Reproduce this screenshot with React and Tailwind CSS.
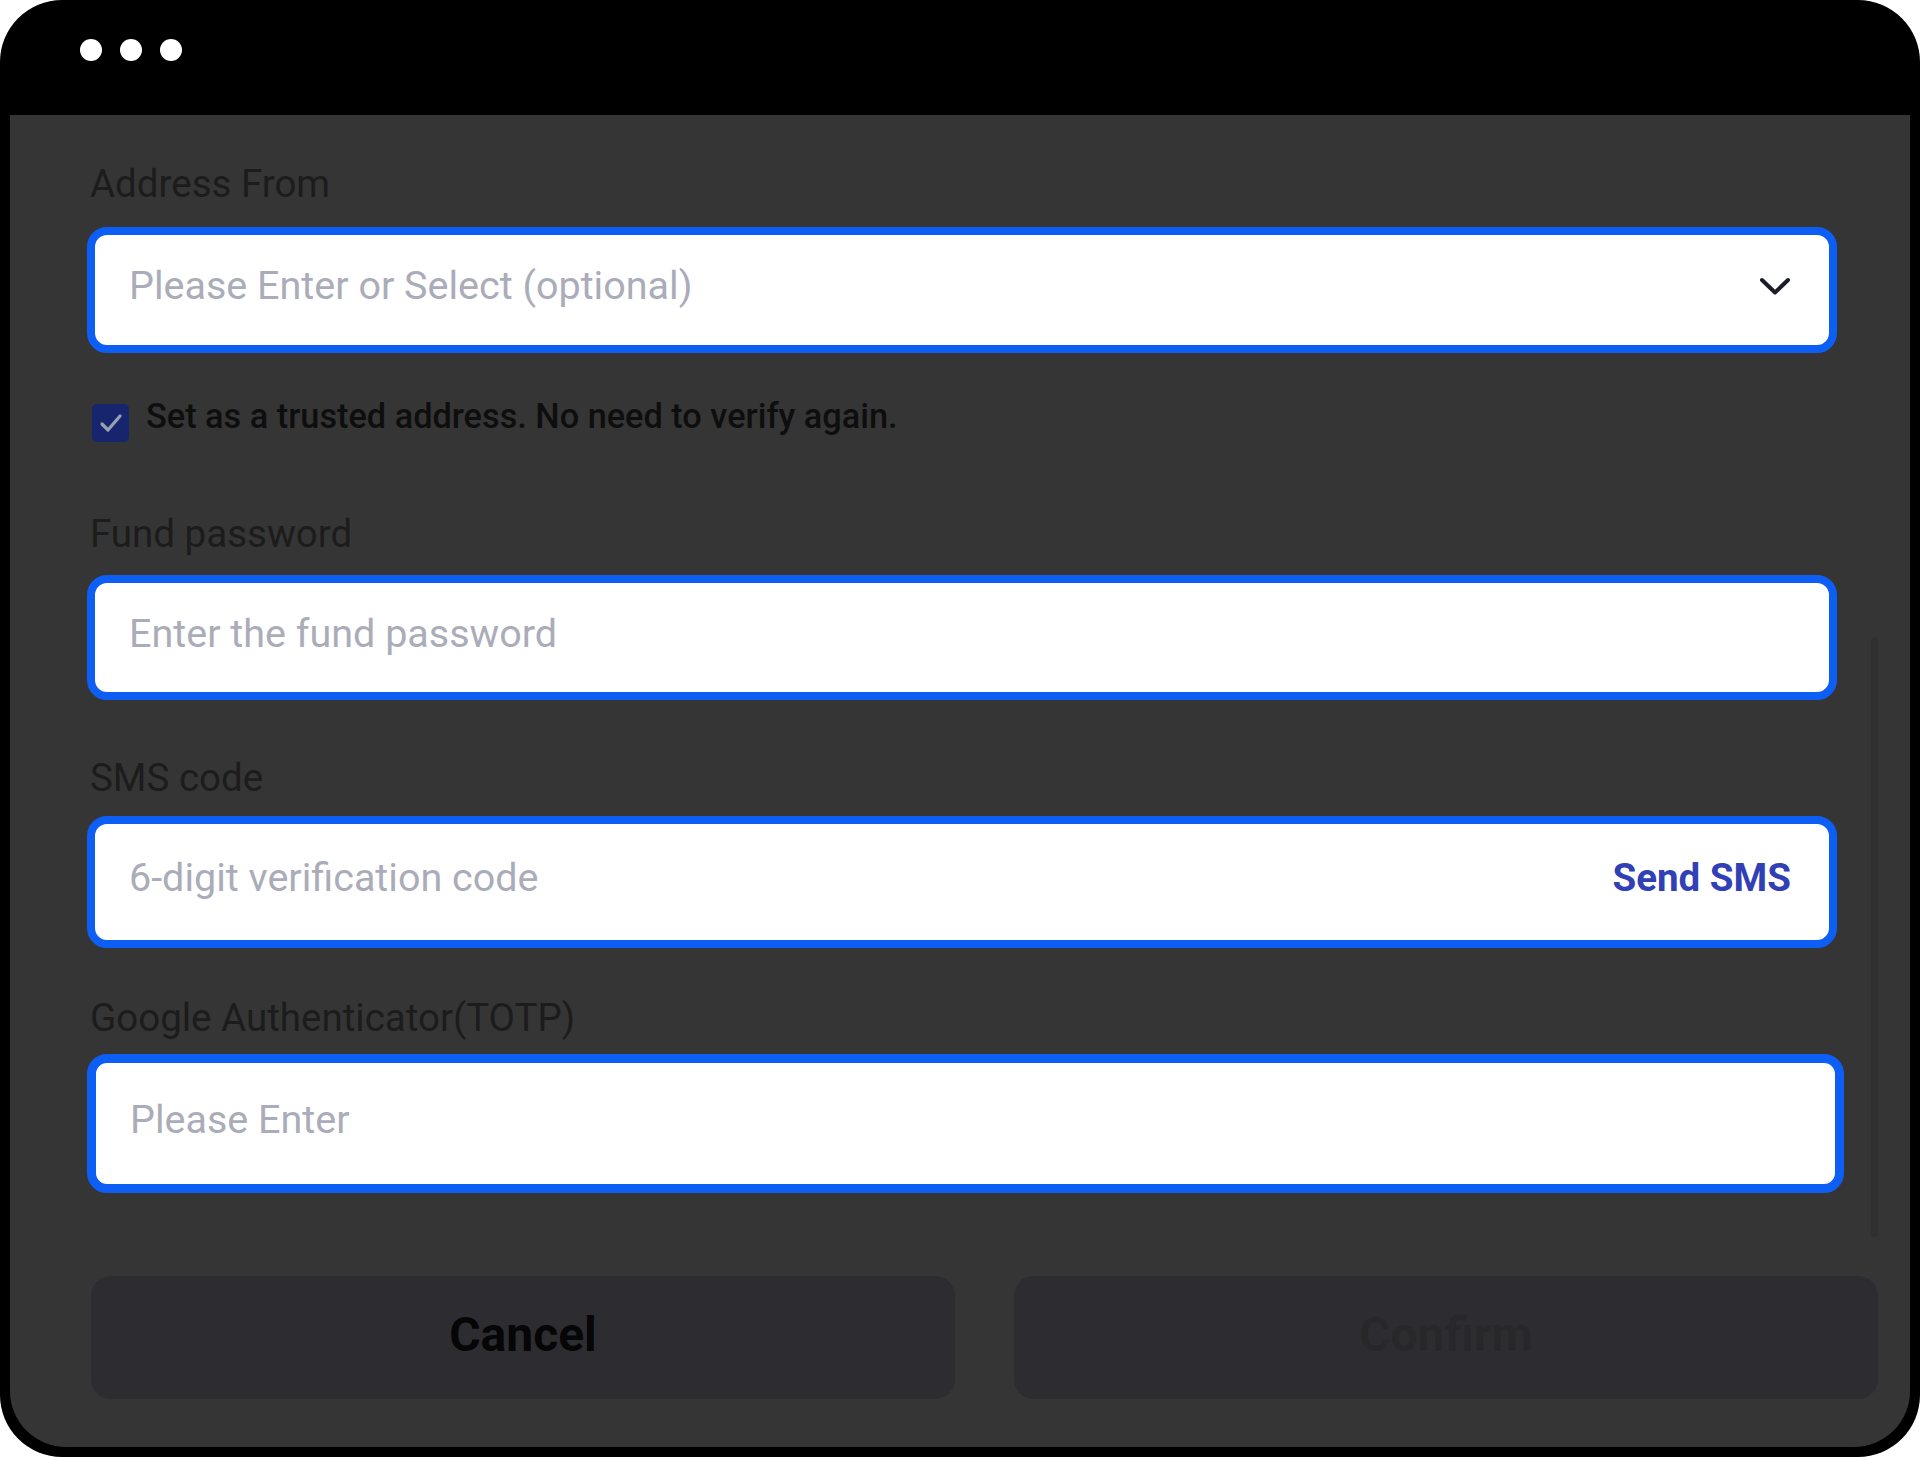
import React from 'react';

const Field = ({ height, width, border, children }) => (
  <div
    className={`flex items-center justify-between bg-white rounded-[20px] border-[#0d5ef4] pl-[34px] pr-[38px] ${height} ${width} ${border}`}
  >
    {children}
  </div>
);

const Placeholder = ({ children }) => (
  <span className="mb-[8px] text-[39.5px] leading-none text-[#aaadb9] font-[Roboto,sans-serif]">{children}</span>
);

const Label = ({ children, className = '' }) => (
  <div className={`pl-[3px] text-[38.5px] leading-[44px] text-[#1c1c1c] font-[Roboto,sans-serif] ${className}`}>
    {children}
  </div>
);

export default function App() {
  return (
    <div className="w-[1920px] h-[1457px] bg-white">
      <div className="w-full h-full bg-black rounded-[62px] flex flex-col overflow-hidden">
        {/* window dots */}
        <div className="h-[115px] shrink-0 flex items-start pt-[39px] pl-[80px] gap-[18px]">
          <span className="w-[22px] h-[22px] rounded-full bg-white" />
          <span className="w-[22px] h-[22px] rounded-full bg-white" />
          <span className="w-[22px] h-[22px] rounded-full bg-white" />
        </div>

        {/* dialog body */}
        <div className="flex-1 mx-[10px] mb-[10px] bg-[#353535] rounded-b-[56px] pl-[77px] pr-[32px] flex flex-col">
          <div className="flex items-start">
            <div className="flex-1 pt-[47px] flex flex-col">
              <Label>Address From</Label>
              <div className="mt-[21px]">
                <Field height="h-[126px]" width="w-[1750px]" border="border-[8px]">
                  <Placeholder>Please Enter or Select (optional)</Placeholder>
                  <svg className="mb-[8px]" width="32" height="19" viewBox="0 0 32 19" fill="none">
                    <path d="M3 3 L16 15.5 L29 3" stroke="#1b1d2a" strokeWidth="4" strokeLinecap="round" strokeLinejoin="round" />
                  </svg>
                </Field>
              </div>

              <div className="mt-[44px] flex items-start pl-[5px]">
                <div className="mt-[7px] w-[37px] h-[38px] rounded-[5px] bg-[#17246e] flex items-center justify-center shrink-0">
                  <svg width="28" height="24" viewBox="0 0 28 24" fill="none">
                    <path d="M5 13 L11 19 L23 5" stroke="#9aa0b4" strokeWidth="3.2" strokeLinecap="round" strokeLinejoin="round" />
                  </svg>
                </div>
                <span className="ml-[17px] text-[34.3px] leading-[38px] font-medium text-[#0e0e0e] font-[Roboto,sans-serif]">
                  Set as a trusted address. No need to verify again.
                </span>
              </div>

              <Label className="mt-[70px]">Fund password</Label>
              <div className="mt-[19px]">
                <Field height="h-[125px]" width="w-[1750px]" border="border-[8px]">
                  <Placeholder>Enter the fund password</Placeholder>
                </Field>
              </div>

              <Label className="mt-[56px]">SMS code</Label>
              <div className="mt-[16px]">
                <Field height="h-[132px]" width="w-[1750px]" border="border-[8px]">
                  <Placeholder>6-digit verification code</Placeholder>
                  <span className="mb-[8px] text-[38.5px] leading-none font-bold text-[#3140b5] font-[Roboto,sans-serif]">Send SMS</span>
                </Field>
              </div>

              <Label className="mt-[48px]">Google Authenticator(TOTP)</Label>
              <div className="mt-[14px]">
                <Field height="h-[139px]" width="w-[1757px]" border="border-[9px]">
                  <Placeholder>Please Enter</Placeholder>
                </Field>
              </div>
            </div>

            {/* scrollbar */}
            <div className="w-[7px] shrink-0">
              <div className="mt-[522px] h-[600px] rounded-full bg-[#303030]" />
            </div>
          </div>

          {/* footer buttons */}
          <div className="mt-[39px] pl-[4px] flex gap-[59px]">
            <button className="flex-1 h-[123px] pb-[5px] rounded-[20px] bg-[#2d2d31] text-[48px] font-bold text-[#060606] font-[Roboto,sans-serif]">
              Cancel
            </button>
            <button className="flex-1 h-[123px] pb-[5px] rounded-[20px] bg-[#2d2d31] text-[48px] font-bold text-[#28282b] font-[Roboto,sans-serif]">
              Confirm
            </button>
          </div>
        </div>
      </div>
    </div>
  );
}
